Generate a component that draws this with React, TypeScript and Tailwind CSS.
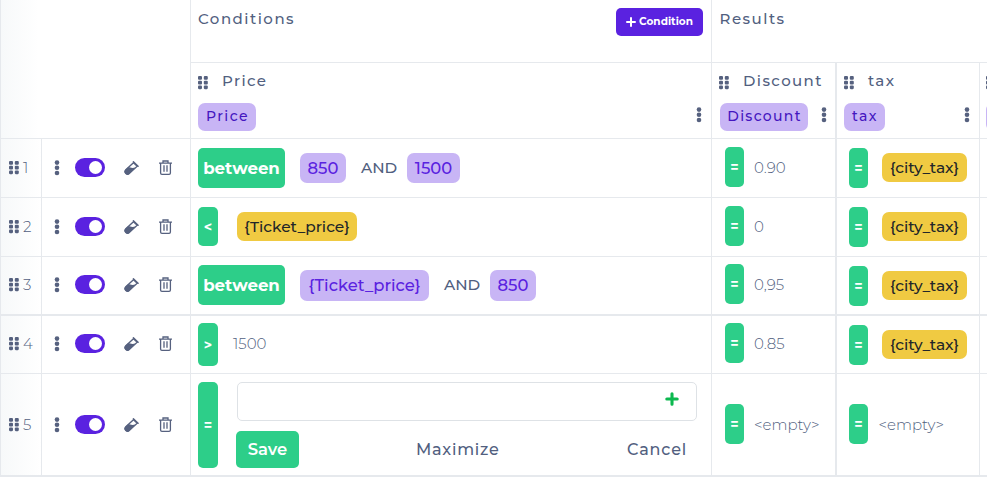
import type { ReactNode } from "react";

const ROWS = "grid grid-cols-[42px_149px_521px_125px_143px_7px]";
const LINE = "border-[#e6e9ed]";

function Dots6({ className = "" }: { className?: string }) {
  return (
    <svg width="10" height="14" viewBox="0 0 10 14" className={"shrink-0 " + className} fill="#56617f">
      {[0, 4.7, 9.4].map((y) => (
        <g key={y}>
          <rect x="0" y={y} width="4" height="3.8" rx="1.1" />
          <rect x="5.8" y={y} width="4" height="3.8" rx="1.1" />
        </g>
      ))}
    </svg>
  );
}

function Dots3({ className = "" }: { className?: string }) {
  return (
    <svg width="6" height="16" viewBox="0 0 6 16" className={"shrink-0 " + className} fill="#56617f">
      <circle cx="3" cy="2.6" r="2.3" />
      <circle cx="3" cy="7.8" r="2.3" />
      <circle cx="3" cy="13" r="2.3" />
    </svg>
  );
}

function Tube({ className = "" }: { className?: string }) {
  return (
    <svg width="15" height="15" viewBox="0 0 15 15" className={"shrink-0 " + className}>
      <path d="M9.5 1.7 13.2 5.2 5.5 12.4a2.5 2.5 0 0 1-3.7-3.6Z" fill="none" stroke="#56617f" strokeWidth="1.3" />
      <path d="M4.3 5.9 8.5 7 11.6 6.6 5.6 12.7a2.8 2.8 0 0 1-4.2-3.9Z" fill="#56617f" />
      <path d="M9.4.8 14.1 5.3" stroke="#56617f" strokeWidth="1.4" strokeLinecap="round" />
    </svg>
  );
}

function Trash({ className = "" }: { className?: string }) {
  return (
    <svg width="13" height="16" viewBox="0 0 13 16" className={"shrink-0 " + className} fill="none" stroke="#56617f" strokeWidth="1.3">
      <path d="M0 3.2h13M4 3V1h5V3M1.6 3.2V13a1.3 1.3 0 0 0 1.3 1.3h7.2a1.3 1.3 0 0 0 1.3-1.3V3.2M5 5.3v6.5M8 5.3v6.5" />
    </svg>
  );
}

function Op({ children, className = "" }: { children: ReactNode; className?: string }) {
  return (
    <span className={"flex shrink-0 items-center justify-center rounded-[5px] bg-[#2dce89] pt-px font-bold text-white " + className}>
      {children}
    </span>
  );
}

function Chip({ children, className = "" }: { children?: ReactNode; className?: string }) {
  return (
    <span className={"flex shrink-0 items-center justify-center rounded-[7px] whitespace-nowrap " + className}>
      {children}
    </span>
  );
}

const purple = "bg-[#c8b5f5] text-[#5a22e0] text-[16.4px] font-medium pt-px";
const yellow = "bg-[#f0ca42] text-[#212529] h-[29px] text-[15.4px] font-medium pt-px";
const head = "text-[15px] font-medium leading-5 text-[#525f7f]";
const and = "ml-[15px] w-[37px] pt-px text-[15.3px] font-medium";

type RowData = {
  n: number;
  h: string;
  line: string;
  cond: ReactNode;
  disc: string;
  tax: boolean;
  discPad: string;
  taxPad: string;
  ctlPad: string;
};

const rows: RowData[] = [
  {
    n: 1, h: "h-[59px]", line: "border-b", disc: "0.90", tax: true, discPad: "pt-2", taxPad: "pt-[9px]", ctlPad: "pt-[19px]",
    cond: (
      <div className="flex items-center pt-[9px]">
        <Op className="h-10 w-[87px] text-[16.6px]">between</Op>
        <Chip className={"ml-[15px] h-[30px] w-[46px] " + purple}>850</Chip>
        <span className={and}>AND</span>
        <Chip className={"ml-[9px] h-[30px] w-[53px] " + purple}>1500</Chip>
      </div>
    ),
  },
  {
    n: 2, h: "h-[59px]", line: "border-b", disc: "0", tax: true, discPad: "pt-2", taxPad: "pt-[9px]", ctlPad: "pt-[19px]",
    cond: (
      <div className="flex items-center pt-[9px]">
        <Op className="h-[39px] w-5 text-[14px]">&lt;</Op>
        <Chip className={"ml-[19px] w-[120px] " + yellow}>{"{Ticket_price}"}</Chip>
      </div>
    ),
  },
  {
    n: 3, h: "h-[59px]", line: "border-b-2", disc: "0,95", tax: true, discPad: "pt-[7px]", taxPad: "pt-[9px]", ctlPad: "pt-[18px]",
    cond: (
      <div className="flex items-center pt-2">
        <Op className="h-10 w-[87px] text-[16.6px]">between</Op>
        <Chip className={"ml-[15px] h-[31px] w-[129px] " + purple}>{"{Ticket_price}"}</Chip>
        <span className={and}>AND</span>
        <Chip className={"ml-[9px] h-[31px] w-[46px] " + purple}>850</Chip>
      </div>
    ),
  },
  {
    n: 4, h: "h-[58px]", line: "border-b", disc: "0.85", tax: true, discPad: "pt-[7px]", taxPad: "pt-[9px]", ctlPad: "pt-[18px]",
    cond: (
      <div className="flex items-center pt-[7px]">
        <Op className="h-[43px] w-5 text-[14px]">&gt;</Op>
        <span className="ml-[15px] text-[15px] font-light">1500</span>
      </div>
    ),
  },
  {
    n: 5, h: "h-[103px]", line: "border-b-2", disc: "<empty>", tax: false, discPad: "pt-[30px]", taxPad: "pt-[30px]", ctlPad: "pt-[41px]",
    cond: (
      <div className="flex pt-2">
        <Op className="h-[86px] w-5 text-[14px]">=</Op>
        <div className="ml-[18px] w-[462px]">
          <div className="ml-px flex h-[39px] w-[460px] items-center justify-end rounded-[5px] border border-[#dee2e6] pr-[17px]">
            <svg width="14" height="14" viewBox="0 0 14 14" stroke="#0cb84f" strokeWidth="3.1" strokeLinecap="round" className="-mt-[5px]">
              <path d="M7 1.8v10.4M1.8 7h10.4" />
            </svg>
          </div>
          <div className="mt-[10px] flex h-[37px] items-center text-[16px] font-medium">
            <span className="flex h-full w-[63px] items-center justify-center rounded-[5px] bg-[#2dce89] text-[16.4px] font-semibold text-white">Save</span>
            <span className="ml-[117px] w-[83px] tracking-[0.75px]">Maximize</span>
            <span className="ml-[128px] w-[61px] tracking-[0.85px]">Cancel</span>
          </div>
        </div>
      </div>
    ),
  },
];

function Row({ r }: { r: RowData }) {
  return (
    <div className={`${ROWS} ${r.h} text-[#525f7f]`}>
      <div className={`flex items-start border-x pl-2 ${LINE} ${r.line} ${r.ctlPad} bg-linear-to-r from-[#f7f9fa] to-white`}>
        <Dots6 className="mt-[3px]" />
        <span className="ml-1 text-[15px] leading-[20px] font-light">{r.n}</span>
      </div>
      <div className={`flex items-start border-r pl-3 ${LINE} ${r.line} ${r.ctlPad}`}>
        <Dots3 className="mt-[2px]" />
        <span className="ml-[15px] flex h-[19px] w-[30px] items-center justify-end rounded-full bg-[#5a22e0] pr-[3px]">
          <span className="size-[13px] rounded-full bg-white" />
        </span>
        <Tube className="mt-[3px] ml-[19px]" />
        <Trash className="mt-[2px] ml-5" />
      </div>
      <div className={`border-r pl-[7px] ${LINE} ${r.line}`}>{r.cond}</div>
      <div className={`flex items-start border-r-2 pl-[13px] ${LINE} ${r.line} ${r.discPad}`}>
        <Op className="h-10 w-[19px] text-[14px]">=</Op>
        <span className="ml-[10px] text-[15px] leading-[41px] font-light">{r.disc}</span>
      </div>
      <div className={`flex items-start border-r pl-3 ${LINE} ${r.line} ${r.taxPad}`}>
        <Op className="h-10 w-[19px] text-[14px]">=</Op>
        {r.tax ? (
          <Chip className={"mt-[5px] ml-[14px] w-[85px] " + yellow}>{"{city_tax}"}</Chip>
        ) : (
          <span className="ml-[10.5px] text-[15px] leading-[41px] font-light">&lt;empty&gt;</span>
        )}
      </div>
      <div className={`${LINE} ${r.line}`} />
    </div>
  );
}

function Field({ name, w, chipTw = "tracking-[1.45px]" }: { name?: string; w: string; chipTw?: string }) {
  return (
    <>
      <div className="flex h-7 items-start pt-2">
        <Dots6 className="mt-[5px]" />
        <span className={`ml-[14px] tracking-[1.4px] ${head}`}>{name}</span>
      </div>
      <div className="mt-3 flex items-start justify-between">
        <Chip className={`h-7 bg-[#c8b5f5] pb-px pl-px text-[14px] font-medium text-[#4416c0] ${w} ${chipTw}`}>{name}</Chip>
        <Dots3 className="mt-1" />
      </div>
    </>
  );
}

export default function App() {
  return (
    <div className="h-[477px] w-[987px] overflow-hidden bg-white font-[Montserrat,Inter,sans-serif]">
      <div className="flex h-[139px]">
        <div className={`w-[191px] border-x border-b bg-linear-to-r from-[#f7f9fa] to-white to-20% ${LINE}`} />
        <div className={`w-[521px] border-r border-b ${LINE}`}>
          <div className={`flex h-[63px] items-start justify-between border-b pt-2 pr-2 pl-[7px] ${LINE}`}>
            <span className={`pt-px tracking-[1.5px] ${head}`}>Conditions</span>
            <span className="flex h-7 w-[87px] items-center justify-center rounded-[5px] bg-[#5a22e0] pb-px text-[10.5px] font-bold text-white">
              <svg width="10" height="10" viewBox="0 0 10 10" stroke="white" strokeWidth="2" strokeLinecap="round" className="mr-[3px]">
                <path d="M5 1v8M1 5h8" />
              </svg>
              Condition
            </span>
          </div>
          <div className="pr-[9px] pl-[7px]">
            <Field name="Price" w="w-[58px]" />
          </div>
        </div>
        <div className={`w-[275px] border-b ${LINE}`}>
          <div className={`h-[63px] border-b pt-[9px] pl-[7.5px] ${LINE}`}>
            <span className={`block tracking-[1.5px] ${head}`}>Results</span>
          </div>
          <div className="flex h-[75px]">
            <div className={`w-[125px] border-r-2 pr-2 pl-[7px] ${LINE}`}>
              <Field name="Discount" w="w-[88px] ml-px" chipTw="tracking-[1.3px]" />
            </div>
            <div className={`w-[143px] border-r pr-[9px] pl-[7px] ${LINE}`}>
              <Field name="tax" w="w-[41px]" />
            </div>
            <div className="w-[7px] overflow-hidden pl-[6px]">
              <div className="w-10">
                <Field w="w-[41px]" />
              </div>
            </div>
          </div>
        </div>
      </div>
      {rows.map((r) => (
        <Row key={r.n} r={r} />
      ))}
    </div>
  );
}
